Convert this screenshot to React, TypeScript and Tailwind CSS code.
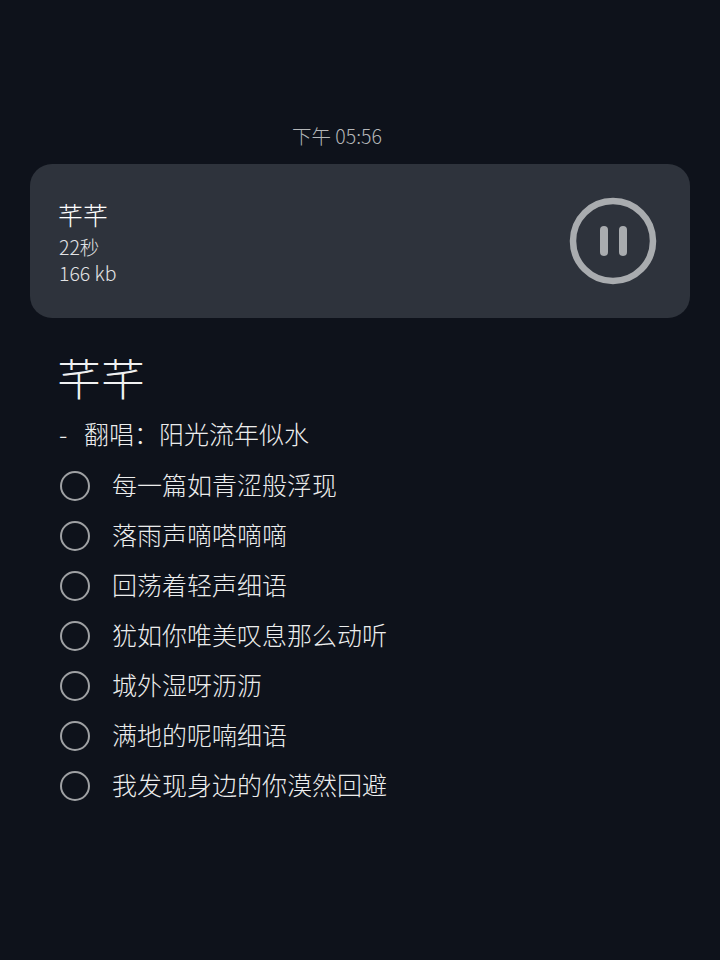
import { ReactNode } from "react";

const lines = [
  "每一篇如青涩般浮现",
  "落雨声嘀嗒嘀嘀",
  "回荡着轻声细语",
  "犹如你唯美叹息那么动听",
  "城外湿呀沥沥",
  "满地的呢喃细语",
  "我发现身边的你漠然回避",
];

const font = { fontFamily: '"Noto Sans CJK SC", "Noto Sans", sans-serif' };

const TodoRow = ({ children }: { children: ReactNode }) => (
  <div className="flex h-[50px] items-center">
    <div className="ml-[1px] mt-[4px] h-[30px] w-[30px] shrink-0 rounded-full border-2 border-[#9fa1a4]" />
    <span className="ml-[22px] text-[25px] font-light leading-[50px] text-[#eceded]">{children}</span>
  </div>
);

const App = () => {
  return (
    <div className="h-[960px] w-[720px] overflow-hidden bg-[#0e121b] pt-[121px] antialiased" style={font}>
      {/* time */}
      <p className="pr-[46px] text-center text-[19.5px] font-light leading-[30px] text-[#b4b6b8]">下午 05:56</p>

      {/* voice card */}
      <div className="mx-[30px] mt-[13px] flex h-[154px] items-center justify-between rounded-[22px] bg-[#2e333c] pl-[29px] pr-[33px]">
        <div className="mt-[1px] flex flex-col">
          <span className="ml-[-1px] text-[25px] font-light leading-[32px] text-white">芊芊</span>
          <span className="mt-[4px] text-[19.5px] font-light leading-[26px] text-[#e2e3e5]">22秒</span>
          <span className="text-[19.5px] font-light leading-[26px] text-[#e2e3e5]">166 kb</span>
        </div>
        <svg width="88" height="88" viewBox="0 0 88 88" fill="none">
          <circle cx="44" cy="44" r="40" stroke="#a9acaf" strokeWidth="6.5" />
          <rect x="31" y="29" width="8" height="30" rx="4" fill="#a9acaf" />
          <rect x="50" y="29" width="8" height="30" rx="4" fill="#a9acaf" />
        </svg>
      </div>

      {/* note */}
      <div className="mt-[27px] pl-[59px]">
        <h1 className="ml-[-2px] text-[44px] font-light leading-[64px] text-[#f0f1f2]">芊芊</h1>
        <div className="mt-[2px] flex h-[46px] items-center text-[25px] font-light text-[#eceded]">
          <span className="w-[25px]">-</span>
          <span>翻唱：阳光流年似水</span>
        </div>
        <div className="mt-[2px]">
          {lines.map((line) => (
            <TodoRow key={line}>{line}</TodoRow>
          ))}
        </div>
      </div>
    </div>
  );
};

export default App;
